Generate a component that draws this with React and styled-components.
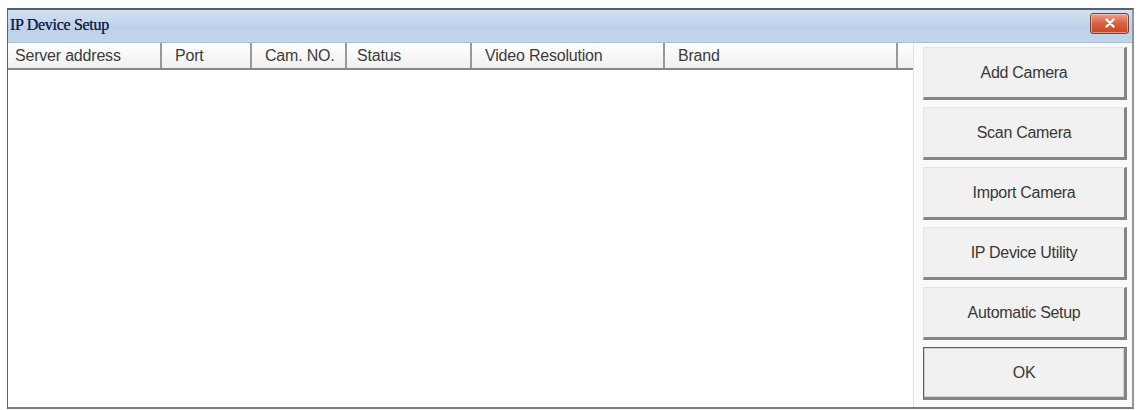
import React from 'react';
import styled, { createGlobalStyle } from 'styled-components';

const GlobalStyle = createGlobalStyle`
  body {
    margin: 0;
    background: #ffffff;
    font-family: "Liberation Sans", Arial, sans-serif;
  }
`;

const Window = styled.div`
  margin: 8px 0 0 7px;
  width: 1127px;
  height: 401px;
  box-sizing: border-box;
  border: 1px solid #5d6670;
  border-top: 2px solid #56606b;
  border-right: 2px solid #8f969d;
  border-bottom: 2px solid #7a7a7a;
  background: #fafafa;
  display: flex;
  flex-direction: column;
`;

const TitleBar = styled.div`
  height: 32px;
  flex-shrink: 0;
  display: flex;
  align-items: center;
  justify-content: space-between;
  padding: 0 3px 0 2px;
  background: linear-gradient(#d3e1f1, #bcd1e9 55%, #c2d5eb);
  border-bottom: 1px solid #aabed7;
`;

const Title = styled.span`
  font-family: "Liberation Serif", "Times New Roman", serif;
  font-size: 16px;
  color: #18244a;
  letter-spacing: -0.3px;
  margin-top: -2px;
  text-shadow: 0 0 0.4px #18244a;
`;

const CloseButton = styled.div`
  width: 39px;
  height: 21px;
  margin-top: -6px;
  box-sizing: border-box;
  border: 1px solid #6e4540;
  border-radius: 3px;
  background: linear-gradient(#eaa28b, #d9603f 50%, #c64629);
  display: flex;
  align-items: center;
  justify-content: center;
  box-shadow: inset 0 0 0 1px rgba(255, 215, 200, 0.55);
`;

const Body = styled.div`
  flex: 1;
  display: flex;
`;

const ListView = styled.div`
  width: 905px;
  background: #ffffff;
  border-right: 1px solid #e4e4e4;
  display: flex;
  flex-direction: column;
`;

const HeaderRow = styled.div`
  display: flex;
  height: 27px;
  background: linear-gradient(#ffffff, #f0f0f0);
  border-bottom: 2px solid #878787;
  box-sizing: border-box;
`;

const HeaderCell = styled.div`
  width: ${p => p.$w}px;
  box-sizing: border-box;
  padding-left: ${p => p.$pad}px;
  border-right: ${p => (p.$last ? 'none' : '2px solid #999999')};
  font-size: 16px;
  letter-spacing: -0.2px;
  color: #3c3c3c;
  display: flex;
  align-items: center;
  white-space: nowrap;
`;

const ButtonColumn = styled.div`
  display: flex;
  flex-direction: column;
  gap: 7px;
  padding: 4px 0 0 9px;
`;

const Button = styled.button`
  width: 204px;
  height: 53px;
  box-sizing: border-box;
  background: #f1f1f1;
  border: 1px solid ${p => (p.$default ? '#5f5f5f' : '#e4e4e4')};
  border-right: 3px solid #858585;
  border-bottom: 3px solid #858585;
  ${p => p.$default && 'box-shadow: inset 0 0 0 1px #d0d0d0;'}
  font-family: "Liberation Sans", Arial, sans-serif;
  font-size: 16px;
  letter-spacing: -0.3px;
  color: #383838;
  padding: 0;
`;

const columns = [
  ['Server address', 154, 7],
  ['Port', 90, 13],
  ['Cam. NO.', 95, 13],
  ['Status', 125, 10],
  ['Video Resolution', 193, 13],
  ['Brand', 233, 13],
  ['', 15, 0],
];

const actions = ['Add Camera', 'Scan Camera', 'Import Camera', 'IP Device Utility', 'Automatic Setup'];

export default function App() {
  return (
    <>
      <GlobalStyle />
      <Window>
        <TitleBar>
          <Title>IP Device Setup</Title>
          <CloseButton>
            <svg width="12" height="10" viewBox="0 0 12 10">
              <path d="M2.5 1.5 L9.5 8.5 M9.5 1.5 L2.5 8.5" stroke="#ffffff" strokeWidth="2.4" strokeLinecap="round" />
            </svg>
          </CloseButton>
        </TitleBar>
        <Body>
          <ListView>
            <HeaderRow>
              {columns.map(([label, w, pad], i) => (
                <HeaderCell key={i} $w={w} $pad={pad} $last={i === columns.length - 1}>
                  {label}
                </HeaderCell>
              ))}
            </HeaderRow>
          </ListView>
          <ButtonColumn>
            {actions.map(a => (
              <Button key={a}>{a}</Button>
            ))}
            <Button $default>OK</Button>
          </ButtonColumn>
        </Body>
      </Window>
    </>
  );
}
